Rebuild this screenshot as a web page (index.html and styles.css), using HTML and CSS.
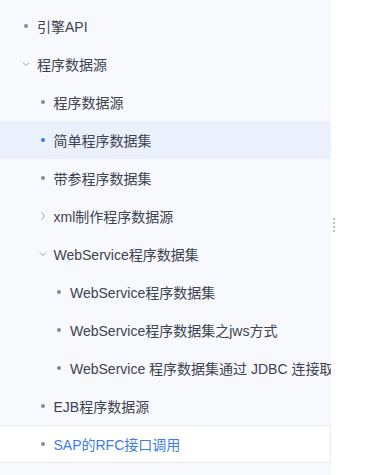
FILE: index.html
```html
<!DOCTYPE html>
<html>

<head>
    <title>文档目录</title>
    <meta charset="UTF-8">
    <link rel="stylesheet" href="styles.css">
</head>

<body>
    <div class="page">
        <div class="sidebar">
            <ul class="tree">
                <li class="row lv1"><span class="mark"><span class="dot"></span></span><span class="label">引擎API</span></li>
                <li class="row lv1"><span class="mark"><svg width="8" height="8" viewBox="0 0 8 8"><polyline points="1,2.5 4,5.5 7,2.5" /></svg></span><span class="label">程序数据源</span></li>
                <li class="row lv2"><span class="mark"><span class="dot"></span></span><span class="label">程序数据源</span></li>
                <li class="row lv2 active"><span class="mark"><span class="dot"></span></span><span class="label">简单程序数据集</span></li>
                <li class="row lv2"><span class="mark"><span class="dot"></span></span><span class="label">带参程序数据集</span></li>
                <li class="row lv2"><span class="mark"><svg width="8" height="8" viewBox="0 0 8 8"><polyline points="2.5,0.5 5.5,4 2.5,7.5" /></svg></span><span class="label">xml制作程序数据源</span></li>
                <li class="row lv2"><span class="mark"><svg width="8" height="8" viewBox="0 0 8 8"><polyline points="1,2.5 4,5.5 7,2.5" /></svg></span><span class="label">WebService程序数据集</span></li>
                <li class="row lv3"><span class="mark"><span class="dot"></span></span><span class="label">WebService程序数据集</span></li>
                <li class="row lv3"><span class="mark"><span class="dot"></span></span><span class="label">WebService程序数据集之jws方式</span></li>
                <li class="row lv3"><span class="mark"><span class="dot"></span></span><span class="label">WebService 程序数据集通过 JDBC 连接取数</span></li>
                <li class="row lv2"><span class="mark"><span class="dot"></span></span><span class="label">EJB程序数据源</span></li>
                <li class="row lv2 hover"><span class="mark"><span class="dot"></span></span><span class="label">SAP的RFC接口调用</span></li>
            </ul>
        </div>
        <div class="splitter">
            <span></span><span></span><span></span><span></span>
        </div>
    </div>
</body>

</html>
```

FILE: styles.css
```css
html, body {
    margin: 0;
    padding: 0;
    height: 100%;
    background-color: #fff;
}

.page {
    display: flex;
    height: 475px;
    font-family: "Liberation Sans", "Noto Sans CJK SC", sans-serif;
    font-size: 14px;
    color: #3d4350;
}

.sidebar {
    width: 331px;
    flex-shrink: 0;
    background-color: #f7f9fc;
    overflow: hidden;
}

.tree {
    list-style: none;
    margin: 0;
    padding: 7px 0 0 0;
}

.row {
    display: flex;
    align-items: center;
    height: 38px;
    box-sizing: border-box;
    white-space: nowrap;
}

.lv1 { padding-left: 20px; }
.lv2 { padding-left: 36.5px; }
.lv3 { padding-left: 53px; }

.mark {
    width: 12px;
    height: 12px;
    margin-right: 5px;
    display: flex;
    align-items: center;
    justify-content: center;
    flex-shrink: 0;
}

.mark svg polyline {
    fill: none;
    stroke: #9aa0aa;
    stroke-width: 1;
}

.dot {
    width: 4px;
    height: 4px;
    border-radius: 50%;
    background-color: #858b96;
}

.active {
    background-color: #eaf1fc;
}

.active .dot {
    background-color: #2f80ed;
}

/* hovered row */
.hover {
    background-color: #fff;
    border-top: 1px solid #e9ebef;
    border-bottom: 1px solid #e9ebef;
    border-right: 1px solid #e9ebef;
}

.hover .label {
    color: #3b7de4;
}

.splitter {
    display: flex;
    flex-direction: column;
    gap: 2px;
    padding: 218px 0 0 2px;
}

.splitter span {
    width: 2px;
    height: 2px;
    background-color: #b9bfc9;
}
```
